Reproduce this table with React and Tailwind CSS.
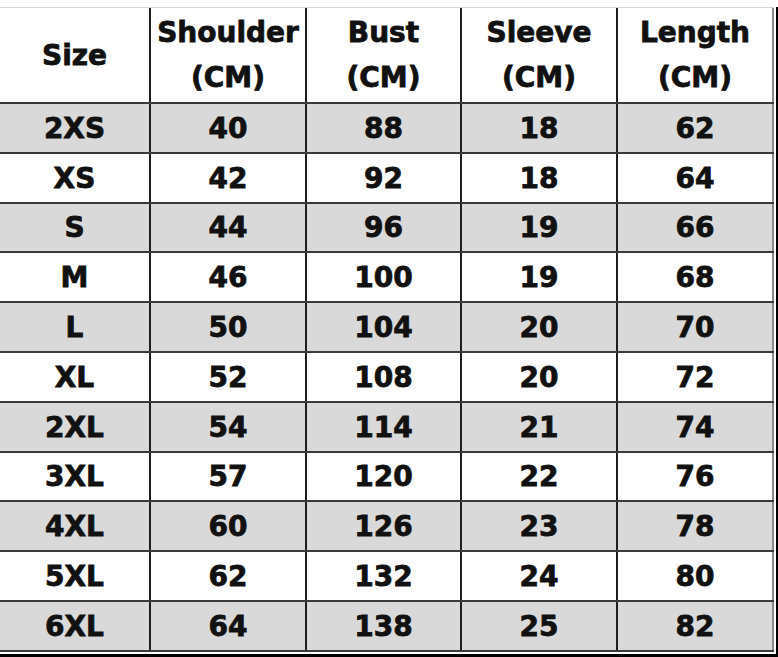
import React from 'react';

const HEADERS = [
  ['Size'],
  ['Shoulder', '(CM)'],
  ['Bust', '(CM)'],
  ['Sleeve', '(CM)'],
  ['Length', '(CM)'],
];

const ROWS = [
  ['2XS', 40, 88, 18, 62],
  ['XS', 42, 92, 18, 64],
  ['S', 44, 96, 19, 66],
  ['M', 46, 100, 19, 68],
  ['L', 50, 104, 20, 70],
  ['XL', 52, 108, 20, 72],
  ['2XL', 54, 114, 21, 74],
  ['3XL', 57, 120, 22, 76],
  ['4XL', 60, 126, 23, 78],
  ['5XL', 62, 132, 24, 80],
  ['6XL', 64, 138, 25, 82],
];

const cols = 'grid grid-cols-[151px_156px_155px_156px_156px]';

const Cell = ({ last, children }) => (
  <div
    className={
      'flex flex-col items-center justify-center border-r-2 ' +
      (last ? 'border-[#8a8a8a]' : 'border-[#1e1e1e]')
    }
  >
    {children}
  </div>
);

const SizeChart = () => {
  return (
    <div className="w-[774px] border-t border-[#d4d4d4]">
      <div className={`${cols} h-[96px] border-b-2 border-[#3a3a3a] bg-white`}>
        {HEADERS.map((lines, i) => (
          <Cell key={i} last={i === HEADERS.length - 1}>
            {lines.map((t) => (
              <span key={t} className="leading-[44px] pt-[1px]">
                {t}
              </span>
            ))}
          </Cell>
        ))}
      </div>
      {ROWS.map((row, r) => (
        <div
          key={row[0]}
          className={`${cols} h-[49.8px] border-b-2 border-[#3a3a3a] ${
            r % 2 === 0 ? 'bg-[#d9d9d9]' : 'bg-white'
          }`}
        >
          {row.map((v, i) => (
            <Cell key={i} last={i === row.length - 1}>
              <span className="leading-none pt-[2px]">{v}</span>
            </Cell>
          ))}
        </div>
      ))}
    </div>
  );
};

export default function App() {
  return (
    <div className="w-[778px] h-[657px] bg-white overflow-hidden flex flex-col text-[28px] font-bold text-[#111] [-webkit-text-stroke:0.8px_#111] font-['DejaVu_Sans',sans-serif]">
      <div className="flex-1 flex pt-[7px]">
        <SizeChart />
        <div className="w-[2px]" />
        <div className="w-[2px] bg-black" />
      </div>
      <div className="h-[3px] bg-black" />
    </div>
  );
}
